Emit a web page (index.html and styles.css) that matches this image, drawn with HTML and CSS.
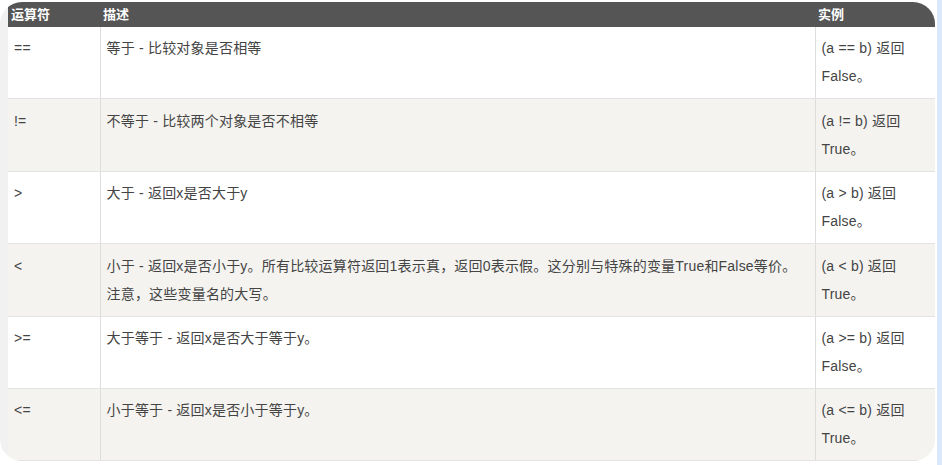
FILE: index.html
```html
<!DOCTYPE html>
<html lang="zh-cn">
<head>
    <meta charset="UTF-8">
    <meta name="viewport" content="width=device-width, initial-scale=1.0">
    <title>比较运算符</title>
    <link rel="stylesheet" href="styles.css">
</head>
<body>
    <div class="card">
        <table class="op-table">
            <thead>
                <tr>
                    <th class="col-op">运算符</th>
                    <th class="col-desc">描述</th>
                    <th class="col-ex">实例</th>
                </tr>
            </thead>
            <tbody>
                <tr>
                    <td>==</td>
                    <td>等于 - 比较对象是否相等</td>
                    <td>(a == b) 返回<br>False。</td>
                </tr>
                <tr>
                    <td>!=</td>
                    <td>不等于 - 比较两个对象是否不相等</td>
                    <td>(a != b) 返回<br>True。</td>
                </tr>
                <tr>
                    <td>&gt;</td>
                    <td>大于 - 返回x是否大于y</td>
                    <td>(a &gt; b) 返回<br>False。</td>
                </tr>
                <tr>
                    <td>&lt;</td>
                    <td>小于 - 返回x是否小于y。所有比较运算符返回1表示真，返回0表示假。这分别与特殊的变量True和False等价。<br>注意，这些变量名的大写。</td>
                    <td>(a &lt; b) 返回<br>True。</td>
                </tr>
                <tr>
                    <td>&gt;=</td>
                    <td>大于等于 - 返回x是否大于等于y。</td>
                    <td>(a &gt;= b) 返回<br>False。</td>
                </tr>
                <tr>
                    <td>&lt;=</td>
                    <td>小于等于 - 返回x是否小于等于y。</td>
                    <td>(a &lt;= b) 返回<br>True。</td>
                </tr>
            </tbody>
        </table>
    </div>
</body>
</html>
```

FILE: styles.css
```css
body {
    margin: 0;
    padding: 2px 0 0 0;
    font-family: "Liberation Sans", "Noto Sans CJK SC", sans-serif;
    background: linear-gradient(90deg, #ffffff 937px, #d9e8fb 937px);
    height: 463px;
    overflow: hidden;
}
.card {
    width: 927px;
    padding-left: 8px;
    background-color: #f1f1f1;
    border-radius: 22px;
    overflow: hidden;
}
.op-table {
    width: 927px;
    border-collapse: collapse;
    table-layout: fixed;
    font-size: 14px;
    color: #444;
}
.op-table th {
    background-color: #555;
    color: #fff;
    font-size: 13px;
    font-weight: bold;
    text-align: left;
    height: 25px;
    padding: 0 3px;
    line-height: 25px;
}
.col-op {
    width: 86px;
}
.col-desc {
    width: 709px;
}
.col-ex {
    width: 114px;
}
.op-table td {
    vertical-align: top;
    padding: 7px 6px 8px 6px;
    line-height: 28px;
    border-left: 1px solid #ddd;
    border-bottom: 1px solid #e3e3e3;
    height: 56px;
    letter-spacing: 0.2px;
}
.op-table tbody tr:nth-child(-n+4):nth-child(even) td {
    padding-top: 8px;
}
.op-table td:first-child {
    border-left: none;
}
.op-table tbody tr:nth-child(odd) td {
    background-color: #fff;
}
.op-table tbody tr:nth-child(even) td {
    background-color: #f4f3f0;
}
```
